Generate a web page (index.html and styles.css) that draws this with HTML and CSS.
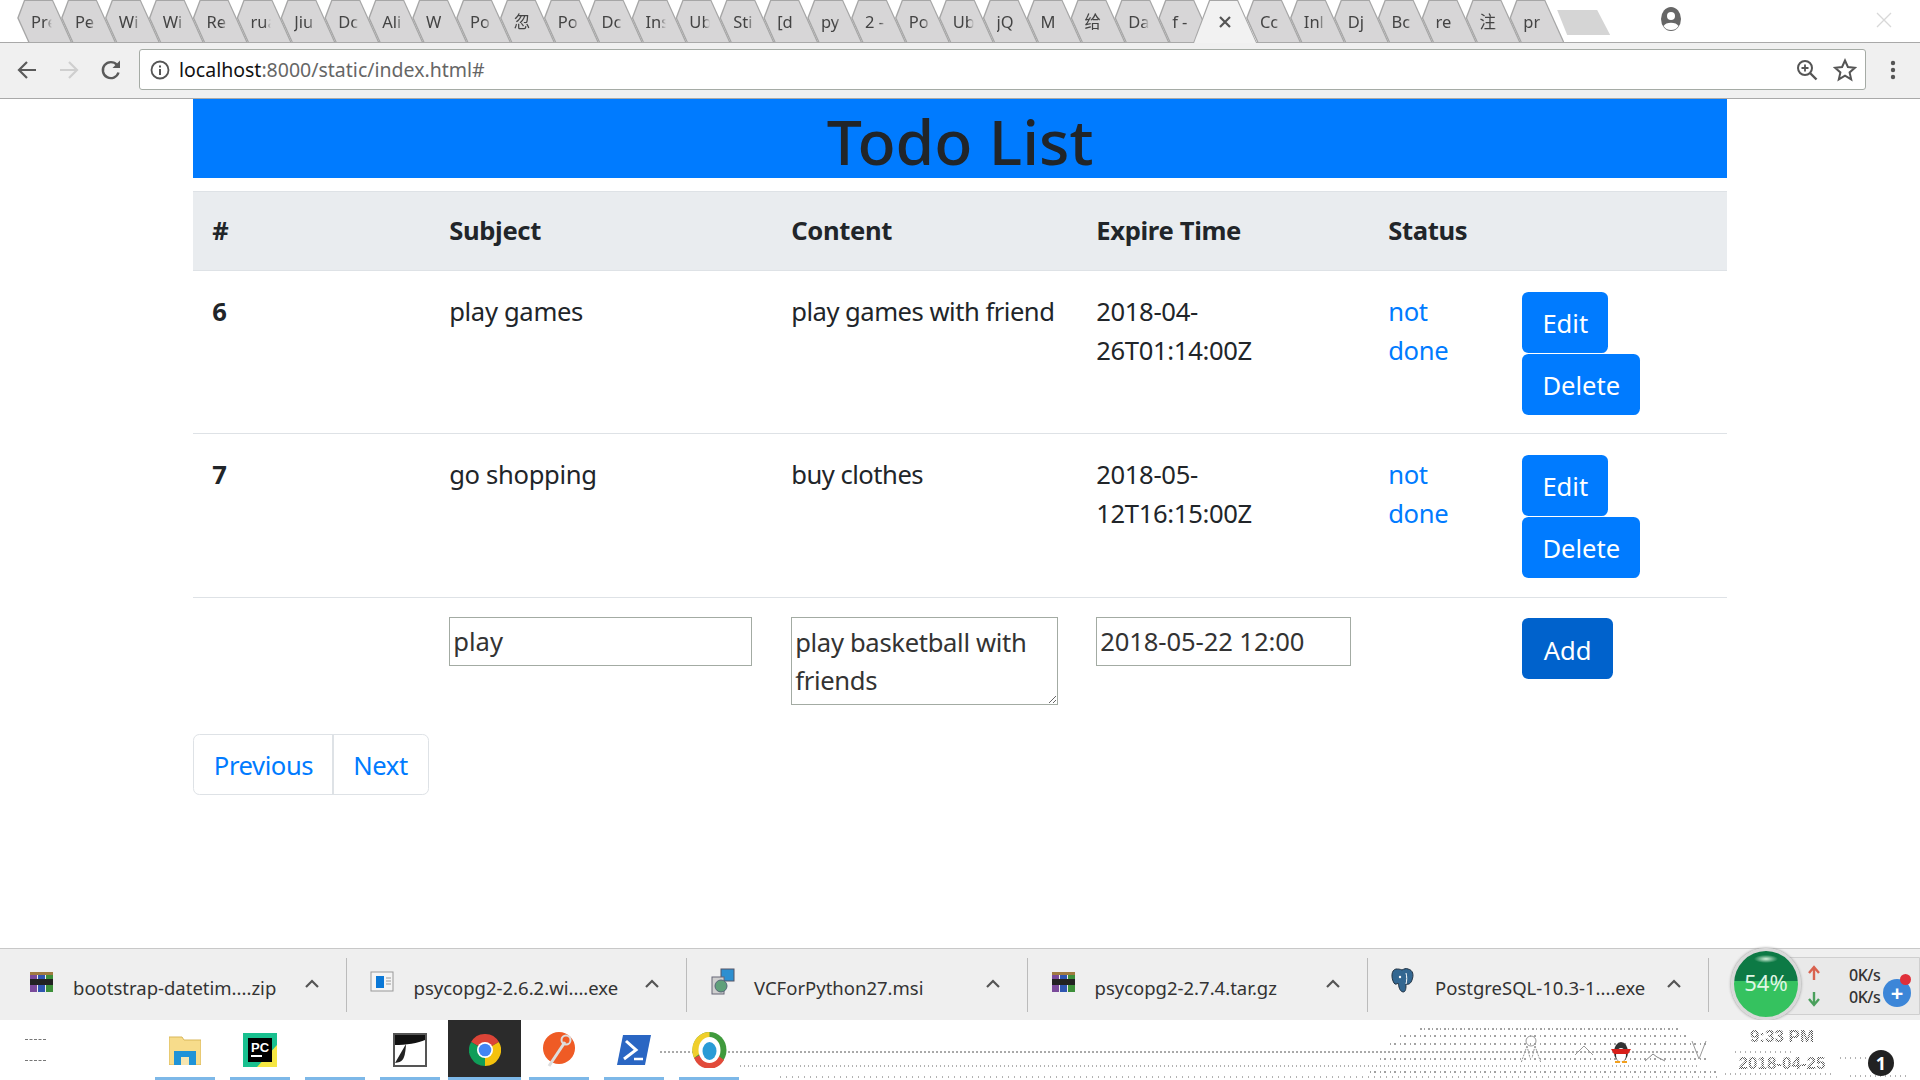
FILE: index.html
```html
<!DOCTYPE html>
<html lang="en">
<head>
<meta charset="utf-8">
<title>Todo List</title>
<link rel="stylesheet" href="styles.css">
</head>
<body>
<div class="tabstrip">
  <div class="tab"><span>Pre</span></div><div class="tab"><span>Pe</span></div><div class="tab"><span>Wi</span></div><div class="tab"><span>Wi</span></div><div class="tab"><span>Re</span></div><div class="tab"><span>rua</span></div><div class="tab"><span>Jiu</span></div><div class="tab"><span>Dc</span></div><div class="tab"><span>Ali</span></div><div class="tab"><span>W</span></div><div class="tab"><span>Po</span></div><div class="tab"><span>忽</span></div><div class="tab"><span>Po</span></div><div class="tab"><span>Dc</span></div><div class="tab"><span>Ins</span></div><div class="tab"><span>Ub</span></div><div class="tab"><span>Sti</span></div><div class="tab"><span>[d</span></div><div class="tab"><span>py</span></div><div class="tab"><span>2 -</span></div><div class="tab"><span>Po</span></div><div class="tab"><span>Ub</span></div><div class="tab"><span>jQ</span></div><div class="tab"><span>M</span></div><div class="tab"><span>给</span></div><div class="tab"><span>Da</span></div><div class="tab"><span>f -</span></div>
  <div class="tab active">
    <svg class="tab-x" width="14" height="14" viewBox="0 0 14 14"><path d="M2 2l10 10M12 2L2 12" stroke="#555" stroke-width="2.2"/></svg>
  </div>
  <div class="tab"><span>Cc</span></div><div class="tab"><span>Inl</span></div><div class="tab"><span>Dj</span></div><div class="tab"><span>Bc</span></div><div class="tab"><span>re</span></div><div class="tab"><span>注</span></div><div class="tab"><span>pr</span></div>
  <div class="newtab"></div>
  <svg class="profile" width="22" height="24" viewBox="0 0 22 24"><ellipse cx="11" cy="12" rx="10" ry="12" fill="#666"/><circle cx="11" cy="9" r="4" fill="#fff"/><path d="M3.5 19c2-4.500 13-4.500 15 0-2 3-4.500 4-7.500 4s-5.500-1-7.500-4z" fill="#fff"/></svg>
  <svg class="winclose" width="16" height="16" viewBox="0 0 16 16"><path d="M1 1l14 14M15 1L1 15" stroke="#d8d8d8" stroke-width="1.300"/></svg>
</div>

<div class="toolbar">
  <svg class="nav-icon" width="22" height="22" viewBox="0 0 22 22"><path d="M20 11H3M11 3l-8 8 8 8" fill="none" stroke="#5a5a5a" stroke-width="2.200"/></svg>
  <svg class="nav-icon" width="22" height="22" viewBox="0 0 22 22"><path d="M2 11h17M11 3l8 8-8 8" fill="none" stroke="#cfcfcf" stroke-width="2.200"/></svg>
  <svg class="nav-icon" width="22" height="22" viewBox="0 0 22 22"><path d="M18.500 13.500A8 8 0 1 1 17 6" fill="none" stroke="#5a5a5a" stroke-width="2.400"/><path d="M20 1.500V9h-7.500z" fill="#5a5a5a"/></svg>
  <div class="omnibox">
    <svg class="info" width="20" height="20" viewBox="0 0 20 20"><circle cx="10" cy="10" r="8.500" fill="none" stroke="#555" stroke-width="1.800"/><rect x="9" y="9" width="2" height="6" fill="#555"/><rect x="9" y="5.500" width="2" height="2" fill="#555"/></svg>
    <div class="url"><span class="url-host">localhost</span>:8000/static/index.html#</div>
    <svg class="omni-icon" width="22" height="22" viewBox="0 0 22 22"><circle cx="9" cy="9" r="7" fill="none" stroke="#555" stroke-width="2"/><path d="M9 5.500v7M5.500 9h7" stroke="#555" stroke-width="1.800"/><path d="M14 14l6.500 6.500" stroke="#555" stroke-width="2.400"/></svg>
    <svg class="omni-icon" width="24" height="24" viewBox="0 0 24 24"><path d="M12 2.500l2.900 6.500 7 .7-5.300 4.700 1.600 7-6.200-3.700-6.200 3.700 1.600-7L2.100 9.700l7-.7z" fill="none" stroke="#555" stroke-width="2"/></svg>
  </div>
  <svg class="menu" width="6" height="20" viewBox="0 0 6 20"><circle cx="3" cy="3" r="2.200" fill="#555"/><circle cx="3" cy="10" r="2.200" fill="#555"/><circle cx="3" cy="17" r="2.200" fill="#555"/></svg>
</div>

<main class="page">
  <h1 class="title">Todo List</h1>
  <table class="todo">
    <colgroup><col class="c1"><col class="c2"><col class="c3"><col class="c4"><col class="c5"><col class="c6"></colgroup>
    <thead>
      <tr><th>#</th><th>Subject</th><th>Content</th><th>Expire Time</th><th>Status</th><th></th></tr>
    </thead>
    <tbody>
      <tr>
        <th>6</th><td>play games</td><td class="content-cell">play games with friend</td><td>2018-04-26T01:14:00Z</td><td><a class="link" href="#">not done</a></td>
        <td><div class="actions"><button class="btn">Edit</button><button class="btn">Delete</button></div></td>
      </tr>
      <tr>
        <th>7</th><td>go shopping</td><td class="content-cell">buy clothes</td><td>2018-05-12T16:15:00Z</td><td><a class="link" href="#">not done</a></td>
        <td><div class="actions"><button class="btn">Edit</button><button class="btn">Delete</button></div></td>
      </tr>
      <tr>
        <th></th>
        <td><input class="field subject" type="text" value="play"></td>
        <td><textarea class="field content">play basketball with friends</textarea></td>
        <td><input class="field expire" type="text" value="2018-05-22 12:00"></td>
        <td></td>
        <td><div class="actions"><button class="btn btn-add">Add</button></div></td>
      </tr>
    </tbody>
  </table>
  <nav class="pager"><a class="page-link" href="#">Previous</a><a class="page-link" href="#">Next</a></nav>
</main>

<div class="downloads">
  <div class="dl">
    <svg class="dl-icon" width="26" height="24" viewBox="0 0 26 24"><rect x="1" y="2" width="7" height="20" fill="#7a4a9a"/><rect x="9" y="2" width="7" height="20" fill="#2f55b0"/><rect x="17" y="2" width="7" height="20" fill="#3d8f3a"/><rect x="1" y="9" width="23" height="6" fill="#222"/><rect x="1" y="2" width="23" height="3" fill="#a07a40"/></svg>
    <span class="dl-name">bootstrap-datetim....zip</span>
    <svg class="chev" width="16" height="10" viewBox="0 0 16 10"><path d="M2 9l6-6 6 6" fill="none" stroke="#555" stroke-width="2.200"/></svg>
  </div>
  <div class="dl">
    <svg class="dl-icon" width="26" height="24" viewBox="0 0 26 24"><rect x="1" y="2" width="22" height="19" fill="#f4f4f4" stroke="#999"/><rect x="6" y="6" width="8" height="12" fill="#0a78d7"/><path d="M16 8h5M16 11h5M16 14h5" stroke="#999"/></svg>
    <span class="dl-name">psycopg2-2.6.2.wi....exe</span>
    <svg class="chev" width="16" height="10" viewBox="0 0 16 10"><path d="M2 9l6-6 6 6" fill="none" stroke="#555" stroke-width="2.200"/></svg>
  </div>
  <div class="dl">
    <svg class="dl-icon" width="26" height="28" viewBox="0 0 26 28"><rect x="11" y="1" width="13" height="12" fill="#2d8fd0" stroke="#556"/><rect x="2" y="9" width="12" height="17" fill="#cfcfcf" stroke="#667"/><circle cx="11" cy="18" r="6" fill="#5fa07a" stroke="#567"/></svg>
    <span class="dl-name">VCForPython27.msi</span>
    <svg class="chev" width="16" height="10" viewBox="0 0 16 10"><path d="M2 9l6-6 6 6" fill="none" stroke="#555" stroke-width="2.200"/></svg>
  </div>
  <div class="dl">
    <svg class="dl-icon" width="26" height="24" viewBox="0 0 26 24"><rect x="1" y="2" width="7" height="20" fill="#7a4a9a"/><rect x="9" y="2" width="7" height="20" fill="#2f55b0"/><rect x="17" y="2" width="7" height="20" fill="#3d8f3a"/><rect x="1" y="9" width="23" height="6" fill="#222"/><rect x="1" y="2" width="23" height="3" fill="#a07a40"/></svg>
    <span class="dl-name">psycopg2-2.7.4.tar.gz</span>
    <svg class="chev" width="16" height="10" viewBox="0 0 16 10"><path d="M2 9l6-6 6 6" fill="none" stroke="#555" stroke-width="2.200"/></svg>
  </div>
  <div class="dl">
    <svg class="dl-icon" width="26" height="28" viewBox="0 0 26 28"><path d="M5 1c-5 1-5 9-2 14 1 2 3 1 4 0 1 3 1 8 5 9 3 0 3-4 3-8 3 1 5-1 6-4 2-5 1-10-4-11-2-1-4 0-6 1-2-1-4-1-6-1z" fill="#336791" stroke="#234"/><circle cx="9" cy="9" r="1.200" fill="#fff"/><path d="M15 5c1 4 1 7 0 11" stroke="#fff" fill="none"/></svg>
    <span class="dl-name">PostgreSQL-10.3-1....exe</span>
    <svg class="chev" width="16" height="10" viewBox="0 0 16 10"><path d="M2 9l6-6 6 6" fill="none" stroke="#555" stroke-width="2.200"/></svg>
  </div>
  <div class="netwidget">
    <div class="net-rates">
      <svg class="net-arrow" width="12" height="16" viewBox="0 0 12 16"><path d="M6 15V4M1 8l5-6 5 6" fill="none" stroke="#d9624f" stroke-width="2.400"/></svg>
      <span class="net-val up">0K/s</span>
      <svg class="net-arrow down" width="12" height="16" viewBox="0 0 12 16"><path d="M6 1v11M1 8l5 6 5-6" fill="none" stroke="#4aa05c" stroke-width="2.400"/></svg>
      <span class="net-val">0K/s</span>
    </div>
    <div class="net-plus">+</div>
    <div class="net-dot"></div>
    <div class="ball">54%</div>
  </div>
</div>

<div class="taskbar">
  <div class="startmarks"><i></i><i></i></div>
  <div class="tile">
    <svg width="32" height="30" viewBox="0 0 32 30"><path d="M0 2h13l2 3h17v25H0z" fill="#f7dc8b" stroke="#d9b75a"/><rect x="5" y="16" width="22" height="14" fill="#1f93d8"/><rect x="12" y="22" width="8" height="8" fill="#f7e6b0"/></svg>
  </div>
  <div class="tile">
    <svg width="34" height="34" viewBox="0 0 34 34"><rect width="34" height="34" fill="#18c08f"/><path d="M34 12v22H14z" fill="#f5e642"/><rect x="5" y="5" width="24" height="24" fill="#000"/><rect x="8" y="22" width="11" height="2" fill="#fff"/><text x="8" y="19" class="pc">PC</text></svg>
  </div>
  <div class="tile"></div>
  <div class="tile">
    <svg width="34" height="34" viewBox="0 0 34 34"><rect x="1" y="1" width="32" height="32" fill="#fff" stroke="#555" stroke-width="2"/><rect x="2" y="2" width="30" height="10" fill="#111"/><path d="M2 12c10 0 24-2 30-5v25H2z" fill="#fff"/><path d="M2 30c7-1 10-2 11-19" fill="#222"/></svg>
  </div>
  <div class="tile tile-active">
    <svg width="32" height="32" viewBox="0 0 32 32"><path d="M16 16L2.140 8A16 16 0 0 1 29.860 8Z" fill="#db4437"/><path d="M16 16L29.860 8A16 16 0 0 1 16 32Z" fill="#f4c20d"/><path d="M16 16L16 32A16 16 0 0 1 2.140 8Z" fill="#0f9d58"/><circle cx="16" cy="16" r="8" fill="#fff"/><circle cx="16" cy="16" r="6.300" fill="#4285f4"/></svg>
  </div>
  <div class="tile">
    <svg width="32" height="36" viewBox="0 0 32 36"><circle cx="16" cy="16" r="16" fill="#ef5b25"/><path d="M6 34L22 10" stroke="#ddd" stroke-width="3"/><circle cx="23" cy="8" r="4.500" fill="none" stroke="#ddd" stroke-width="2"/></svg>
  </div>
  <div class="tile">
    <svg width="34" height="30" viewBox="0 0 34 30"><path d="M6 0h28l-6 30H0z" fill="#2a66c3"/><path d="M9 6l10 9-12 9" fill="none" stroke="#fff" stroke-width="3"/><path d="M17 24h9" stroke="#fff" stroke-width="2.500"/></svg>
  </div>
  <div class="tile">
    <svg width="35" height="36" viewBox="0 0 35 36"><ellipse cx="17.500" cy="18" rx="17" ry="18" fill="#3f9a3c"/><path d="M17.500 0A17 18 0 0 0 2 26L10 20C6 10 12 6 17.500 6z" fill="#f0cf2c"/><path d="M2 26a17 18 0 0 0 30 2l-8-6H10z" fill="#e24a3a"/><ellipse cx="17.500" cy="18" rx="11" ry="13" fill="#fff"/><ellipse cx="17.500" cy="19" rx="7" ry="9" fill="#2a9bd6"/></svg>
  </div>
  <svg class="noise" width="1920" height="60" viewBox="0 0 1920 60">
    <path d="M660 32H1700" stroke="#555" stroke-dasharray="2 2"/>
    <path d="M740 46H1700" stroke="#666" stroke-dasharray="1 3"/>
    <path d="M780 57H1720" stroke="#666" stroke-dasharray="1 5"/>
    <path d="M1400 16H1690M1390 24H1710M1380 39H1710M1370 52H1720" stroke="#444" stroke-dasharray="1 3 2 4"/>
    <path d="M1420 9H1680" stroke="#444" stroke-dasharray="2 2 1 3"/>
    <path d="M1735 32h60M1725 54h110M1840 38h50M1850 56h60" stroke="#666" stroke-dasharray="1 4"/>
  </svg>
  <div class="tray">
    <svg class="tray-person" width="22" height="30" viewBox="0 0 22 30"><circle cx="11" cy="6" r="5" fill="none" stroke="#999"/><path d="M7 11L1 28M15 11l6 17M7 11l3 12M15 11l-3 12" fill="none" stroke="#999" stroke-dasharray="2 1"/></svg>
    <svg class="tray-chev" width="20" height="12" viewBox="0 0 20 12"><path d="M1 11l9-9 9 9" fill="none" stroke="#999"/></svg>
    <svg class="tray-qq" width="22" height="26" viewBox="0 0 22 26"><ellipse cx="11" cy="14" rx="7" ry="10" fill="#333"/><ellipse cx="11" cy="17" rx="5" ry="7" fill="#fff"/><path d="M1 11h20l-3 5H4z" fill="#d8201a"/><path d="M5 24h5M12 24h5" stroke="#f2a01e" stroke-width="2"/></svg>
    <svg class="tray-wave" width="22" height="10" viewBox="0 0 22 10"><path d="M1 9l8-7 4 3 8 4" fill="none" stroke="#888"/></svg>
    <svg class="tray-v" width="16" height="20" viewBox="0 0 16 20"><path d="M1 1l7 18 7-18" fill="none" stroke="#999"/></svg>
    <div class="clock"><span>9:33 PM</span><span>2018-04-25</span></div>
    <div class="badge">1</div>
  </div>
</div>
</body>
</html>
```
FILE: styles.css
```css
* { box-sizing: border-box; }
html, body { margin: 0; height: 100%; }
body {
  display: flex;
  flex-direction: column;
  height: 100vh;
  overflow: hidden;
  background: #fff;
  color: #212529;
  font-family: "Noto Sans", "Noto Sans CJK SC", sans-serif;
}

/* Browser tabs */
.tabstrip {
  height: 43px;
  flex: none;
  display: flex;
  align-items: stretch;
  padding-left: 8px;
  border-bottom: 1px solid #a9a9a9;
  position: relative;
}
.tab {
  width: 43.9px;
  flex: none;
  position: relative;
}
.tab::before, .tab::after {
  content: "";
  position: absolute;
  top: 0;
  left: 0;
  width: 64px;
  height: 42px;
}
.tab::before {
  background: #a6a6a6;
  clip-path: polygon(16px 0, 45px 0, 64px 42px, 20.100px 42px, 9.200px 17.900px);
}
.tab::after {
  background: #d7d6d7;
  clip-path: polygon(17px 1px, 44.200px 1px, 62.600px 42px, 21.500px 42px, 10.700px 18px);
}
.tab span {
  position: absolute;
  left: 23px;
  top: 9px;
  width: 21px;
  height: 26px;
  overflow: hidden;
  font-size: 16.500px;
  line-height: 26px;
  color: #444;
  z-index: 1;
  white-space: nowrap;
  -webkit-mask-image: linear-gradient(90deg, #000 70%, transparent);
  mask-image: linear-gradient(90deg, #000 70%, transparent);
}
.tab.active { z-index: 2; }
.tab.active::before {
  clip-path: polygon(16px 0, 45px 0, 64px 43px, 0 43px);
  height: 43px;
}
.tab.active::after {
  background: #f2f2f2;
  clip-path: polygon(17px 1px, 44.200px 1px, 63px 43px, 1px 43px);
  height: 43px;
}
.tab-x { position: absolute; left: 25px; top: 15px; z-index: 1; }
.newtab {
  width: 53px;
  height: 25px;
  margin: 10px 0 0 13px;
  background: #d5d5d5;
  flex: none;
  clip-path: polygon(0 0, 40px 0, 53px 25px, 10px 25px);
}
.profile { margin: 7px 0 0 50px; flex: none; }
.winclose { margin: 12px 0 0 194px; flex: none; }

/* Browser toolbar */
.toolbar {
  height: 56px;
  flex: none;
  display: flex;
  align-items: center;
  padding: 0 16px 2px 16px;
  gap: 20px;
  background: #f0f0f0;
  border-bottom: 1px solid #a9a9a9;
}
.omnibox {
  width: 1727px;
  height: 41px;
  margin-left: -3px;
  display: flex;
  align-items: center;
  background: #fff;
  border: 1px solid #a5aba5;
  border-radius: 3px;
  padding: 0 8px 0 10px;
}
.url {
  flex: 1;
  margin-left: 9px;
  font-size: 19.500px;
  color: #666;
  white-space: nowrap;
}
.url-host { color: #111; }
.omni-icon { margin-left: 15px; flex: none; }
.menu { margin-left: 4px; flex: none; }
.nav-icon { flex: none; }

/* Page */
.page {
  flex: 1;
  min-height: 0;
  padding: 0 193px;
  overflow: hidden;
}
.title {
  margin: 0 0 12.800px;
  height: 79px;
  background: #007bff;
  text-align: center;
  font-size: 62.500px;
  font-weight: 500;
  line-height: 84px;
  overflow: hidden;
}
.todo {
  width: 100%;
  table-layout: fixed;
  border-collapse: collapse;
  font-size: 25.600px;
  line-height: 38.400px;
  letter-spacing: -.33px;
}
.c1 { width: 237px; }
.c2 { width: 342px; }
.c3 { width: 305px; }
.c4 { width: 292px; }
.c5 { width: 134px; }
.c6 { width: 224px; }
.todo th, .todo td {
  padding: 22px 19.200px 18.600px;
  text-align: left;
  vertical-align: top;
  border-top: 1.600px solid #dee2e6;
}
.todo .content-cell { padding-right: 8px; letter-spacing: -.5px; }
.todo thead th {
  padding-top: 20.500px;
  padding-bottom: 19.700px;
  background: #e9ecef;
  border-bottom: 1.600px solid #dee2e6;
}
.link { color: #007bff; text-decoration: none; }
.actions { display: flex; flex-direction: column; align-items: flex-start; gap: 1px; margin-top: -1.500px; }
.btn {
  height: 61px;
  padding: 4px 20.200px 0;
  background: #007bff;
  border: 0;
  border-radius: 6.400px;
  color: #fff;
  font: inherit;
}
.btn-add { background: #0062cc; padding: 6px 21.500px 0; }
.field {
  display: block;
  border: 1.500px solid #a3aba3;
  padding: 1px 3px;
  margin: -3px 0 0;
  font: inherit;
  letter-spacing: 0;
  color: #333;
  background: #fff;
}
.subject { width: 303px; height: 49px; }
.content { width: 267px; height: 88px; padding-top: 6px; resize: both; overflow: hidden; letter-spacing: -.33px; }
.expire { width: 255px; height: 49px; letter-spacing: -.1px; }
.pager {
  display: inline-flex;
  margin-top: 10.500px;
  font-size: 25.600px;
  line-height: 38.400px;
  letter-spacing: -.4px;
}
.page-link {
  padding: 12px 19.800px 0;
  height: 61px;
  border: 1.600px solid #dee2e6;
  color: #007bff;
  text-decoration: none;
}
.page-link:first-child { border-radius: 6.400px 0 0 6.400px; }
.page-link:last-child { border-radius: 0 6.400px 6.400px 0; margin-left: -1.600px; }

/* Download shelf */
.downloads {
  height: 72px;
  flex: none;
  display: flex;
  padding-left: 6px;
  background: #efefef;
  border-top: 1px solid #c8c8c8;
  position: relative;
}
.dl {
  width: 340.500px;
  height: 54px;
  margin-top: 9px;
  flex: none;
  display: flex;
  align-items: center;
  padding: 0 26px 0 23px;
  border-right: 1px solid #bbb;
  font-size: 18.500px;
  color: #333;
}
.dl-icon { flex: none; margin-top: -6px; }
.dl-name { flex: 1; margin-left: 18px; white-space: nowrap; margin-top: 4px; }
.chev { flex: none; margin-top: -4px; }
.netwidget {
  position: absolute;
  left: 1731px;
  top: -1px;
  width: 189px;
  height: 72px;
}
.net-rates {
  position: absolute;
  left: 30px;
  top: 9px;
  width: 159px;
  height: 58px;
  border-radius: 29px 0 0 29px;
  background: #e9e9e9;
  border: 1px solid #cfcfcf;
  font-size: 16px;
  color: #333;
}
.net-arrow { position: absolute; left: 46px; top: 7px; }
.net-arrow.down { top: 33px; }
.net-val { position: absolute; left: 87px; top: 6px; font-weight: 500; letter-spacing: -.5px; }
.net-val:last-child { top: 28px; }
.net-plus {
  position: absolute;
  left: 152px;
  top: 31px;
  width: 28px;
  height: 28px;
  border-radius: 50%;
  background: #3c86d8;
  color: #fff;
  text-align: center;
  line-height: 26px;
  font-size: 22px;
  font-weight: 700;
}
.net-dot {
  position: absolute;
  left: 169px;
  top: 26px;
  width: 11px;
  height: 11px;
  border-radius: 50%;
  background: #e0303a;
}
.ball {
  position: absolute;
  left: 0;
  top: 0;
  width: 70px;
  height: 72px;
  border-radius: 50%;
  border: 3px solid #d9d9d9;
  background:
    radial-gradient(ellipse 12px 4px at 50% 12%, #d6f0dc, transparent),
    linear-gradient(#0d7a45 0 45%, #35c25f 45% 100%);
  color: #dff5e4;
  font-size: 22px;
  line-height: 62px;
  text-align: center;
  box-shadow: 0 0 3px #888;
}

/* Windows taskbar */
.taskbar {
  height: 60px;
  flex: none;
  display: flex;
  background: #fff;
  position: relative;
}
.startmarks {
  width: 155px;
  flex: none;
  padding: 19px 0 0 25px;
}
.startmarks i {
  display: block;
  width: 21px;
  height: 21px;
  border-top: 1px dashed #777;
}
.tile {
  width: 60px;
  margin-right: 15px;
  flex: none;
  display: flex;
  align-items: center;
  justify-content: center;
  border-bottom: 3px solid #7db8e8;
  position: relative;
  z-index: 1;
  padding-top: 2px;
}
.tile-active {
  width: 73px;
  margin: 0 8px 0 -7px;
  background: #2b2b2b;
}
.pc { font: 700 13px "Liberation Sans", sans-serif; fill: #fff; }
.noise { position: absolute; left: 0; top: 0; }
.tray { position: absolute; inset: 0; }
.tray svg { position: absolute; }
.tray-person { left: 1520px; top: 15px; }
.tray-chev { left: 1574px; top: 24px; }
.tray-qq { left: 1610px; top: 18px; }
.tray-wave { left: 1644px; top: 32px; }
.tray-v { left: 1691px; top: 20px; }
.clock {
  position: absolute;
  left: 1725px;
  top: 6px;
  width: 114px;
  display: flex;
  flex-direction: column;
  align-items: center;
  gap: 5px;
  font: 700 17px/22px "Liberation Sans", sans-serif;
}
.clock span {
  color: transparent;
  background: repeating-conic-gradient(#555 0 25%, #fff 0 50%) 0 0 / 2px 2px;
  -webkit-background-clip: text;
  background-clip: text;
}
.badge {
  position: absolute;
  left: 1868px;
  top: 30px;
  width: 26px;
  height: 26px;
  border-radius: 50%;
  background: #222;
  color: #fff;
  font-size: 18px;
  line-height: 26px;
  text-align: center;
  font-weight: 700;
}
```
